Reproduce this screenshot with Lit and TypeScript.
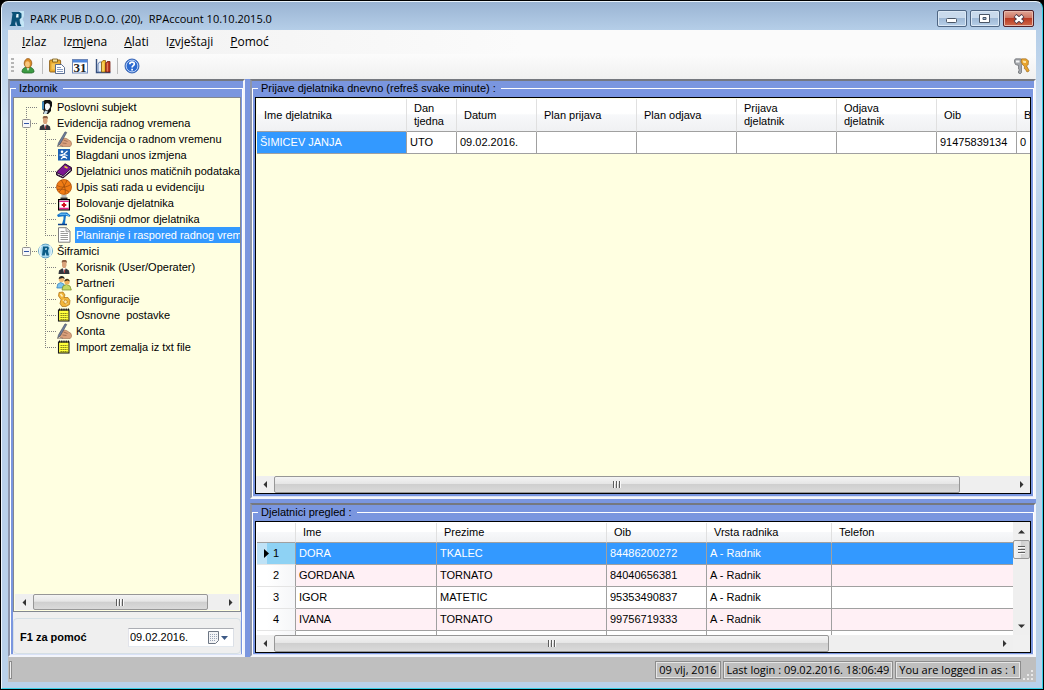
import { LitElement, html, svg, css, nothing, TemplateResult } from "lit";
import { customElement, property, state } from "lit/decorators.js";
import { classMap } from "lit/directives/class-map.js";

/* ---------- icons, all drawn in a 16 x 16 box ---------- */
const icons: Record<string, TemplateResult> = {
  logo: svg`<path d="M10 0h5v5l-1.500 3.500L15 11v5h-3z" fill="#c4e6f6"/><path d="M2.500 1h8l2 1.500v4L10.500 8.500l.5 4 1.500 2.500H8.500L7 10l-1 3 1 2H.500L2 13 3.500 3z" fill="#0b5177"/><path d="M7.500 3h2v3.500h-2.500z" fill="#e8f6fc"/>`,
  user: svg`<path d="M2 14c0-3 2-5 6-5s6 2 6 5l-2 1H4z" fill="#3d9b43" stroke="#226a2a" stroke-width=".8"/><path d="M6.500 9.500h3L8 13z" fill="#fff"/><ellipse cx="8" cy="5.300" rx="3.800" ry="4.700" fill="#d98a27" stroke="#8d4f10" stroke-width=".7"/><ellipse cx="7.500" cy="6.200" rx="2.300" ry="3" fill="#f8c67d"/>`,
  paste: svg`<rect x=".6" y="2" width="11" height="12" rx="1" fill="#e9a92c" stroke="#8a5a12" stroke-width=".9"/><path d="M3.500 1h5v3h-5z" fill="#f4e0a0" stroke="#77550f" stroke-width=".8"/><path d="M2.500 5.500h7v6h-7z" fill="#f6c75b"/><path d="M6.500 6.500h6l3 3v6h-9z" fill="#fff" stroke="#4a5f85" stroke-width=".9"/><path d="M8 9.500h4M8 11.500h6M8 13.500h6" stroke="#7990b8" stroke-width=".9"/>`,
  calendar: svg`<rect x=".5" y="1.500" width="15" height="13.500" fill="#fff" stroke="#6e87b8"/><path d="M1 2h14v2.500H1z" fill="#4f87dd"/><text x="8" y="14" text-anchor="middle" font-family="Liberation Serif, serif" font-weight="bold" font-size="13" fill="#222">31</text>`,
  chart: svg`<path d="M1.500 1v13.500H15.500" stroke="#36507e" fill="none" stroke-width="1.400"/><path d="M3 6l1.500-2 2 0v10H3z" fill="#e6eefa" stroke="#4a6aa3" stroke-width=".8"/><path d="M6.500 4l1.500-1.500h2.500V14h-4z" fill="#f1b92b" stroke="#8f6512" stroke-width=".8"/><path d="M10.800 5l1.500-1.500h2.700V14h-4.200z" fill="#bf3a25" stroke="#74190e" stroke-width=".8"/><path d="M12.300 5v8.500" stroke="#ee8a62"/><path d="M8 4.500v9" stroke="#fbe28c"/>`,
  help: svg`<circle cx="8" cy="8" r="7" fill="#2c6ad0" stroke="#1d4da3" stroke-width=".8"/><circle cx="8" cy="8" r="5.900" fill="none" stroke="#cfe0fb" stroke-width=".9"/><path d="M5.800 6.200C5.800 3.300 10.400 3.400 10.300 6c0 1.600-2.200 1.700-2.200 3.400M8.100 10.700v1.700" stroke="#fff" stroke-width="1.700" fill="none"/>`,
  keys: svg`<path d="M1.500 .8h5l2 1.700v3.500L7.500 7.500v7L6 16l-1.500-1v-2l1-1-1-1V7.500L1.500 6.500.5 4.500V2z" fill="#a2a6ab" stroke="#55585c" stroke-width=".6"/><path d="M2 2.500h3.500v2H2z" fill="#f4f5f6"/><path d="M7.500 .8h4.500l2.500 2-.3 4-1.700 1 2.700 4.700-1.200 1.500-1.500-.5-.8-2-1.400-.8.200-2L8.500 6.500 7 4z" fill="#e9a42c" stroke="#94611a" stroke-width=".6"/><path d="M8.500 2.500l3.500 .5v2H9.500z" fill="#fde3a1"/>`,
  head: svg`<path d="M5 3l3-2h5l2 2v4l-1 2v3l-3 3H6l1-3-2-2z" fill="#111"/><path d="M8 5.500l2-1.500 2.500 1 .7 3-1.200 2-1.500 1.500-1.700-.500L8 9z" fill="#f6f6f6"/><path d="M5 2.500h2v8H5z" fill="#3f86b8"/><path d="M8 11.500l3 1-1.500 2.500H6.500z" fill="#c6dbe6"/>`,
  person: svg`<path d="M2.500 15l.5-3.500 3-2h4l3 2 .5 3.500z" fill="#33363c"/><path d="M7 9h2.500l-1 5H8z" fill="#fff"/><path d="M8 10.500h.8v3.500H8z" fill="#b32020"/><path d="M6 2.500h4.500v4L9.500 9H7L6 7z" fill="#d9a37b"/><path d="M5.800 4V2l1-1h3l1 1v2l-1-1h-3z" fill="#8a5f43"/>`,
  hand: svg`<path d="M4 9.500L7.500 7l3 .500 4.500 3 .7 3-1.500 2H7l-3.500-1.500z" fill="#d9a07c" stroke="#9b6a4c" stroke-width=".6"/><path d="M7.500 9l4 1.500M6.500 12l4 .500" stroke="#8d5f45" stroke-width=".7"/><path d="M9 .8L10.800 1.500 4.500 12.500l-2.800 2.500.7-3z" fill="#6f7f9c" stroke="#333c4e" stroke-width=".5"/><path d="M1 15.300h6" stroke="#7b695c" stroke-width=".7"/>`,
  sport: svg`<rect x="2" y="2" width="12" height="11.500" fill="#1d62b5"/><circle cx="6" cy="4.800" r="1.300" fill="#fff"/><path d="M11.500 4L8 7l-3.500 1 3.500 1.500L5 12M8 9l3 2.500M8 7.500l3.500 1" stroke="#fff" stroke-width="1.200" fill="none"/>`,
  book: svg`<path d="M.6 9L9 .800l6.400 3.700V8l-8.400 7-6.400-3z" fill="#7a1690" stroke="#16021b" stroke-width=".9"/><path d="M1 9.800l6 2.900L15 5.500v2L7 14.300 1 11.500z" fill="#f4f0f5" stroke="#16021b" stroke-width=".8"/><path d="M8.500 3.500l3 1.500" stroke="#f2d43b" stroke-width="1.500"/>`,
  ball: svg`<circle cx="8" cy="8" r="7.500" fill="#f07c14" stroke="#b3540a" stroke-width=".8"/><path d="M1 6.500c5 2.500 9 2 14-1M5 1c3 4 5 9 4 14M1 10.500c5-1 9 0 12 2.500M11 1c-1 4-5 9-8 12" stroke="#8a420c" stroke-width=".6" fill="none"/>`,
  medic: svg`<path d="M5.500 0h5v2.500h-5z" fill="#bdbdbd"/><path d="M4.500 2.500h7v2h-7z" fill="#333"/><rect x="2.600" y="4.600" width="10.800" height="10.300" fill="#fff" stroke="#000" stroke-width="1.200"/><path d="M3.200 6.300h9.600M3.200 13.500h9.600" stroke="#e2248c" stroke-width="1.300"/><path d="M8 7.700v4.600M5.700 10h4.600" stroke="#d20f1c" stroke-width="2"/>`,
  palm: svg`<path d="M1 4l4-2.500h6l3.500 3-1 1.200-3.500-1L9.500 8 9 13H6L7.500 8 7.500 5.300 2 6z" fill="#1574c9"/><path d="M3.500 3.200h6l3.500 1.300" stroke="#7fd0ff" fill="none"/><path d="M2 13.500h9" stroke="#0c3f86" stroke-width="1.500"/>`,
  page: svg`<path d="M2.500.7h8l3.500 3.500v11h-11.500z" fill="#fff" stroke="#7e7e7e"/><path d="M10 .7v4h4" fill="#dcdcdc" stroke="#8b8b8b" stroke-width=".8"/><path d="M4.500 4.500h4M4.500 6.500h7.500M4.500 8.500h7.500M4.500 10.500h7.500M4.500 12.500h7.500" stroke="#8f8f8f" stroke-width=".9"/>`,
  globe: svg`<circle cx="8.500" cy="8" r="6.900" fill="#a9daf0" stroke="#5d9fc2"/><path d="M4.500 2.500C2 5 2 11 4.500 13.500M12.500 2.500c2.500 2.500 2.500 8.500 0 11" stroke="#e9f7fd" stroke-width="1.200" fill="none"/><path d="M6 3.500h5l1 1.500-1 3 1 4.500H9.500L8.500 9l-.8 3.500H5z" fill="#0b5c86"/><path d="M8.500 5h1.300L9.500 7H8.200z" fill="#d9f2fb"/>`,
  partners: svg`<path d="M.8 13l1-4 3-1.500 3 1.500 1 4z" fill="#7cc4ef" stroke="#2d79b5" stroke-width=".7"/><circle cx="5.500" cy="4.500" r="2.700" fill="#f2bd77"/><path d="M2.700 4c0-4 6-4 6 0l-2-1z" fill="#2b2a26"/><path d="M6 15l1-4 3.500-1.500L14 11l1.300 4z" fill="#c6d862" stroke="#73871f" stroke-width=".7"/><circle cx="11" cy="7" r="2.600" fill="#f0b35c"/><path d="M8.300 6.500c.3-4 5.500-3.500 5.400 0l-2-1z" fill="#4a3312"/>`,
  config: svg`<path d="M3 1.500l4-.5 2 3-1 2.500 4 0 2 3-.5 4L10 15.500H6L4 12.500l1-4L2.500 5z" fill="#f1b53a" stroke="#ae6f12" stroke-width=".7"/><path d="M4.500 3l2 2.500M7 9l4 4" stroke="#fff0bf" stroke-width="1.600"/><circle cx="9.500" cy="10.800" r="1.800" fill="#fbe9b4" stroke="#b77b16" stroke-width=".7"/>`,
  notes: svg`<rect x="2.500" y="3" width="10.500" height="11" fill="#ffff3c" stroke="#1a1a1a" stroke-width="1.100"/><path d="M3 2.500h10" stroke="#111" stroke-width="1.800" stroke-dasharray="1.200 1"/><path d="M4.500 6.500h7M4.500 8.500h7M4.500 10.500h7M4.500 12.500h7" stroke="#6c6914" stroke-width=".9" stroke-dasharray="1.400 .6"/>`,
};
const icon = (name: string) =>
  html`<svg class="icon" width="16" height="16" viewBox="0 0 16 16" aria-hidden="true">${icons[name]}</svg>`;

/* ---------- scroll bar ---------- */
@customElement("scroll-bar")
class ScrollBar extends LitElement {
  @property() orient: "h" | "v" = "h";
  @property({ type: Number }) size = 50;

  static styles = css`
    :host { display: block; background: #efefef; }
    .bar { display: flex; width: 100%; height: 100%; }
    .bar.v { flex-direction: column; }
    button { flex: none; width: 18px; height: 16px; padding: 0; border: 0; background: none; display: grid; place-items: center; }
    .v button { width: 17px; height: 18px; }
    .track { flex: 1; min-width: 0; min-height: 0; display: flex; }
    .v .track { flex-direction: column; }
    .thumb { box-sizing: border-box; border: 1px solid #979797; border-radius: 2px; display: grid; place-items: center;
      background: linear-gradient(#f4f4f4 0%, #e6e6e6 45%, #cfcfcf 50%, #dadada 100%); }
    .v .thumb { background: linear-gradient(90deg, #f4f4f4 0%, #e6e6e6 45%, #cfcfcf 50%, #dadada 100%); }
    .grip { width: 8px; height: 7px; background: repeating-linear-gradient(90deg, #5c5c5c 0 1px, #fafafa 1px 2px, transparent 2px 3px); }
    .v .grip { width: 7px; height: 8px; background: repeating-linear-gradient(#5c5c5c 0 1px, #fafafa 1px 2px, transparent 2px 3px); }
  `;

  private arrow(d: string, label: string) {
    return html`<button aria-label=${label}><svg width="7" height="7" viewBox="0 0 7 7"><path d=${d} fill="#333"/></svg></button>`;
  }

  render() {
    const v = this.orient === "v";
    const length = `${v ? "height" : "width"}:${this.size}%`;
    return html`<div class=${classMap({ bar: true, v })}>
      ${v ? this.arrow("M0 5.500L3.500 2 7 5.500z", "Gore") : this.arrow("M5 0L1.500 3.500 5 7z", "Lijevo")}
      <div class="track"><div class="thumb" style=${length}><span class="grip"></span></div></div>
      ${v ? this.arrow("M0 1.500L3.500 5 7 1.500z", "Dolje") : this.arrow("M2 0l3.500 3.500L2 7z", "Desno")}
    </div>`;
  }
}

/* ---------- navigation tree ---------- */
interface Node { text: string; icon: string; level: 0 | 1; parent?: boolean; first?: boolean; last?: boolean; under?: boolean; }

const nodes: Node[] = [
  { text: "Poslovni subjekt", icon: "head", level: 0, first: true },
  { text: "Evidencija radnog vremena", icon: "person", level: 0, parent: true },
  { text: "Evidencija o radnom vremenu", icon: "hand", level: 1, under: true },
  { text: "Blagdani unos izmjena", icon: "sport", level: 1, under: true },
  { text: "Djelatnici unos matičnih podataka", icon: "book", level: 1, under: true },
  { text: "Upis sati rada u evidenciju", icon: "ball", level: 1, under: true },
  { text: "Bolovanje djelatnika", icon: "medic", level: 1, under: true },
  { text: "Godišnji odmor djelatnika", icon: "palm", level: 1, under: true },
  { text: "Planiranje i raspored radnog vreme", icon: "page", level: 1, under: true, last: true },
  { text: "Šiframici", icon: "globe", level: 0, parent: true, last: true },
  { text: "Korisnik (User/Operater)", icon: "person", level: 1 },
  { text: "Partneri", icon: "partners", level: 1 },
  { text: "Konfiguracije", icon: "config", level: 1 },
  { text: "Osnovne  postavke", icon: "notes", level: 1 },
  { text: "Konta", icon: "hand", level: 1 },
  { text: "Import zemalja iz txt file", icon: "notes", level: 1, last: true },
];

@customElement("nav-tree")
class NavTree extends LitElement {
  @state() private selected = 8;

  static styles = css`
    :host { display: block; overflow: hidden; }
    ul { margin: 0; padding: 0; list-style: none; }
    li { display: flex; height: 16px; align-items: center; }
    svg { flex: none; display: block; }
    .guide { stroke: #808080; stroke-dasharray: 1 1; fill: none; }
    .label { flex: none; height: 16px; margin-left: 3px; padding: 0 1px; border: 0; background: none; color: #000; font: inherit; line-height: 16px; white-space: pre; }
    .label.on { background: #3399ff; color: #fff; }
  `;

  private rootGuide(n: Node) {
    const deep = n.level === 1;
    const y1 = n.first ? 8 : 0;
    const y2 = n.last && !deep ? 8 : 16;
    return svg`<svg width="23" height="16" viewBox="0 0 23 16" aria-hidden="true">
      ${!deep || n.under ? svg`<path class="guide" d=${`M12.500 ${y1}V${y2}`}/>` : nothing}
      ${!deep ? svg`<path class="guide" d="M12 8.500H23"/>` : nothing}
      ${n.parent ? svg`<rect x="8.500" y="4.500" width="8" height="8" rx="1" fill="#f7f7f7" stroke="#919191"/><path d="M10 8.500h5" stroke="#3355a5"/>` : nothing}
    </svg>`;
  }

  render() {
    return html`<ul role="tree" aria-label="Izbornik">${nodes.map((n, i) => html`
      <li role="treeitem" aria-level=${n.level + 1} aria-selected=${i === this.selected}>
        ${this.rootGuide(n)}
        ${n.level ? html`<svg width="19" height="16" viewBox="0 0 19 16" aria-hidden="true">
          <path class="guide" d=${`M8.500 0V${n.last ? 8 : 16}`}/><path class="guide" d="M8 8.500H19"/></svg>` : nothing}
        ${icon(n.icon)}
        <button class=${classMap({ label: true, on: i === this.selected })} @click=${() => (this.selected = i)}>${n.text}</button>
      </li>`)}</ul>`;
  }
}

/* ---------- application window ---------- */
const menu = [["", "I", "zlaz"], ["Iz", "m", "jena"], ["", "A", "lati"], ["I", "z", "vještaji"], ["", "P", "omoć"]];
const logColumns: [string, number][] = [["Ime djelatnika", 150], ["Dan\ntjedna", 50], ["Datum", 80], ["Plan prijava", 100],
  ["Plan odjava", 100], ["Prijava\ndjelatnik", 100], ["Odjava\ndjelatnik", 100], ["Oib", 80], ["B", 0]];
const logRow = ["ŠIMICEV JANJA", "UTO", "09.02.2016.", "", "", "", "", "91475839134", "0"];
const staffColumns: [string, number][] = [["", 39], ["Ime", 141], ["Prezime", 170], ["Oib", 100], ["Vrsta radnika", 125], ["Telefon", 0]];
const staff = [
  ["DORA", "TKALEC", "84486200272"],
  ["GORDANA", "TORNATO", "84040656381"],
  ["IGOR", "MATETIC", "95353490837"],
  ["IVANA", "TORNATO", "99756719333"],
];

@customElement("app-root")
class AppRoot extends LitElement {
  static styles = css`
    :host { display: block; height: 100vh; background: #000; color: #000; font: 11px/13px "Liberation Sans", Arial, sans-serif; }
    * { box-sizing: border-box; }
    button { font: inherit; color: inherit; }
    .ui { font: 12px/16px "Open Sans", "Noto Sans", sans-serif; }
    .ui.small { font-size: 11px; }

    .window { height: 100%; padding: 0 6px 6px; display: flex; flex-direction: column; border: 1px solid; border-color: #e9f3fb #35cfe6 #35cfe6 #eef6fc; border-radius: 7px 7px 0 0;
      background: linear-gradient(#9ab4d3 0, #b5cee8 28px, #cfe1f3 120px, #b9d1ea 220px, #b9d1ea 100%); }
    .shell { height: 100%; padding: 1px; }
    .title { display: flex; align-items: center; height: 28px; padding: 5px 2px 0 1px; flex: none; gap: 5px; }
    .title h1 { flex: 1; margin: 0; font: inherit; white-space: pre; }
    .controls { display: flex; gap: 3px; align-self: flex-start; padding-top: 3px; }
    .control { width: 30px; height: 17px; padding: 0; border: 1px solid #4f6683; border-radius: 2px; display: grid; place-items: center;
      background: linear-gradient(#c9daec 0 45%, #9fb9d6 50%, #b7cfe8); box-shadow: inset 0 0 0 1px #dbe8f5; }
    .control.close { width: 31px; border-color: #51202a; background: linear-gradient(#e0a595 0, #cf7764 45%, #b93a23 50%, #cf6a4c); box-shadow: inset 0 0 0 1px #e8b9ac; }
    .icon { display: block; flex: none; }

    .client { flex: 1; min-height: 0; display: flex; flex-direction: column; background: #f0f0f0; }
    .menu { display: flex; flex: none; height: 24px; padding-left: 5px; align-items: center; background: linear-gradient(90deg, #f0f0f0, #fbfbfb 50%); }
    .menu button { padding: 0 8px 0 9px; height: 20px; border: 0; background: none; white-space: nowrap; }
    .tools { display: flex; flex: none; height: 25px; padding: 0 3px 1px; align-items: center; background: linear-gradient(#fcfcfc, #f0f0f0); }
    .tools button { width: 23px; height: 22px; padding: 0; border: 0; background: none; display: grid; place-items: center; }
    .grip { width: 3px; height: 16px; margin-right: 2px; background: repeating-linear-gradient(#b5b5b5 0 2px, transparent 2px 4px); }
    .rule { width: 1px; height: 16px; margin: 0 2px 0 3px; background: #bdbdbd; }
    .push { margin-left: auto; }

    .main { flex: 1; min-height: 0; display: grid; grid-template-columns: 237px minmax(0, 1fr); column-gap: 5px; background: #7a96df; }
    .column { display: grid; grid-template-rows: minmax(0, 1fr) auto; row-gap: 4px; min-height: 0; }
    .panel { min-width: 0; min-height: 0; display: flex; background: #7a96df; border: 2px solid; border-color: #75787f #f3f5fb #f3f5fb #8d95aa; }
    fieldset { flex: 1; min-width: 0; min-height: 0; margin: 0; padding: 2px 2px 1px; display: flex; flex-direction: column; border: 1px solid; border-color: #fff #fff #d9e1f6; }
    .nav fieldset { padding: 2px 1px 0 2px; }
    .log fieldset { padding-bottom: 2px; }
    .panel legend { margin-left: 3px; padding: 0 5px 0 3px; height: 14px; line-height: 14px; white-space: pre; }

    .treebox { flex: 1; min-height: 0; display: flex; flex-direction: column; padding-top: 1px; background: #ffffe1; border: 1px solid #828790; }
    .treebox nav-tree { flex: 1; min-height: 0; }
    .hbar { flex: none; height: 16px; }
    .treebox .hbar { margin: 0 1px 1px; }
    .date { flex: none; padding-top: 6px; background: #efefef; }
    .daterow { display: flex; align-items: center; height: 36px; padding: 2px 6px 0; border: 1px solid #d5dfe5; border-radius: 4px; }
    .daterow label { flex: 1; font-weight: bold; }
    .picker { display: flex; width: 106px; height: 19px; background: #fff; border: 1px solid; border-color: #abadb3 #dbdfe6 #e3e9ef #e2e3ea; }
    .picker input { flex: 1; min-width: 0; padding: 0 0 0 1px; border: 0; background: none; font: inherit; outline: none; }
    .picker button { width: 28px; padding: 0; border: 0; background: none; display: grid; place-items: center; }

    .grid { flex: 1; min-height: 0; display: grid; grid-template-rows: minmax(0, 1fr) 17px; border: 1px solid #000; background: #ffffe1; overflow: hidden; }
    .grid .hbar { height: 17px; }
    .staff { grid-template-columns: minmax(0, 1fr) 17px; background: #fff; }
    .view { min-width: 0; min-height: 0; overflow: hidden; padding: 1px 0 0 1px; }
    .staff .view { height: 113px; }
    .corner { background: #f0f0f0; }
    table { width: 100%; table-layout: fixed; border-collapse: separate; border-spacing: 0; }
    th { height: 33px; padding: 0 0 0 7px; overflow: hidden; text-align: left; font-weight: normal; white-space: pre-line; border-right: 1px solid #e0e0e0; border-bottom: 1px solid #a0a0a0;
      background: linear-gradient(#fff 0 45%, #f7f8fa 50%, #f0f1f3); }
    td { height: 22px; padding: 0 3px; overflow: hidden; white-space: nowrap; background: #fff; border-right: 1px solid #a0a0a0; border-bottom: 1px solid #a0a0a0; }
    td.sel, tr.sel td { background: #3399ff; color: #fff; }
    .staff thead th { height: 20px; }
    .staff tr > :last-child, .log tr > :last-child { border-right: 0; }
    .staff tbody tr:nth-child(even) td { background: #fff0f5; }
    .staff tbody th { height: 22px; border-right-color: #a0a0a0; border-bottom-color: #e4e4e4; background: linear-gradient(90deg, #fff 25%, #f5f6f8); }
    .staff tbody tr.sel th { background: linear-gradient(90deg, #bfe2f6 25%, #8ed2f4 26%); }
    .rowhead { display: flex; align-items: center; gap: 1px; }
    .mark { width: 8px; }
    .staff tbody tr:last-child > * { border-bottom: 0; }

    .status { flex: none; height: 25px; display: flex; align-items: center; gap: 2px; background: #bfbfbf; }
    .status .cell { height: 18px; padding: 0 3px; border: 1px solid #8c8c8c; box-shadow: inset 0 0 0 1px #e6e6e6; white-space: nowrap; }
    .status .handle { width: 3px; height: 18px; margin: 0 auto 0 1px; border: 1px solid #8c8c8c; background: #f0f0f0; }
    .sizer { align-self: flex-end; display: block; }
  `;

  private cols(list: [string, number][]) {
    return html`<colgroup>${list.map(([, w]) => (w ? html`<col style=${`width:${w}px`}>` : html`<col>`))}</colgroup>`;
  }

  private tool(name: string, label: string) {
    return html`<button aria-label=${label} title=${label}>${icon(name)}</button>`;
  }

  render() {
    return html`<div class="shell"><div class="window">
      <header class="title ui small">
        ${icon("logo")}
        <h1>PARK PUB D.O.O. (20),  RPAccount 10.10.2015.0</h1>
        <div class="controls">
          <button class="control" aria-label="Minimiziraj"><svg width="12" height="9"><rect x=".5" y="4.500" width="10" height="4" rx="1" fill="#fff" stroke="#4a5666"/></svg></button>
          <button class="control" aria-label="Maksimiziraj"><svg width="12" height="9"><path d="M.5.500h10v8H.500zM4 3.500v2h3v-2z" fill="#fff" fill-rule="evenodd" stroke="#4a5666"/></svg></button>
          <button class="control close" aria-label="Zatvori"><svg width="12" height="10"><path d="M2 1.500L10 8.500M10 1.500L2 8.500" stroke="#4e3a48" stroke-width="4.400"/><path d="M2.500 2L9.500 8M9.500 2L2.500 8" stroke="#fff" stroke-width="2.600"/></svg></button>
        </div>
      </header>
      <div class="client">
        <nav class="menu ui">${menu.map(([a, k, b]) => html`<button>${a}<u>${k}</u>${b}</button>`)}</nav>
        <div class="tools" role="toolbar">
          <span class="grip"></span>
          ${this.tool("user", "Korisnik")}
          <span class="rule"></span>
          ${this.tool("paste", "Zalijepi")}${this.tool("calendar", "Kalendar")}${this.tool("chart", "Grafikon")}
          <span class="rule"></span>
          ${this.tool("help", "Pomoć")}
          <span class="push">${this.tool("keys", "Lozinke")}</span>
        </div>
        <main class="main">
          <section class="panel nav">
            <fieldset>
              <legend>Izbornik</legend>
              <div class="treebox">
                <nav-tree></nav-tree>
                <scroll-bar class="hbar" size="93"></scroll-bar>
              </div>
              <div class="date"><div class="daterow">
                <label for="day">F1 za pomoć</label>
                <div class="picker">
                  <input id="day" type="text" value="09.02.2016.">
                  <button aria-label="Otvori kalendar"><svg width="22" height="13" viewBox="0 0 22 13"><path d="M.5.500h10v9l-3 3h-7z" fill="#f3f4f6" stroke="#6d7684"/><path d="M2 3.500h7M2 5.500h7M2 7.500h7M2 9.500h5" stroke="#9aa5b8" stroke-dasharray="1 1"/><path d="M13 5h7l-3.500 4z" fill="#3d5a86"/></svg></button>
                </div>
              </div></div>
            </fieldset>
          </section>
          <div class="column">
            <section class="panel log">
              <fieldset>
                <legend>Prijave djelatnika dnevno (refreš svake minute) :</legend>
                <div class="grid">
                  <div class="view"><table>
                    ${this.cols(logColumns)}
                    <thead><tr>${logColumns.map(([t]) => html`<th>${t}</th>`)}</tr></thead>
                    <tbody><tr>${logRow.map((t, i) => html`<td class=${i ? "" : "sel"}>${t}</td>`)}</tr></tbody>
                  </table></div>
                  <scroll-bar class="hbar" size="93"></scroll-bar>
                </div>
              </fieldset>
            </section>
            <section class="panel">
              <fieldset>
                <legend>Djelatnici pregled :</legend>
                <div class="grid staff">
                  <div class="view"><table>
                    ${this.cols(staffColumns)}
                    <thead><tr>${staffColumns.map(([t]) => html`<th>${t}</th>`)}</tr></thead>
                    <tbody>
                      ${staff.map((r, i) => html`<tr class=${i ? "" : "sel"}>
                        <th scope="row"><span class="rowhead"><svg class="mark" width="8" height="9" viewBox="0 0 8 9">${i ? nothing : svg`<path d="M0 0l5 4.500L0 9z"/>`}</svg>${i + 1}</span></th>
                        ${r.map((t) => html`<td>${t}</td>`)}<td>A - Radnik</td><td></td></tr>`)}
                      <tr><th></th><td></td><td></td><td></td><td></td><td></td></tr>
                    </tbody>
                  </table></div>
                  <scroll-bar orient="v" size="25"></scroll-bar>
                  <scroll-bar class="hbar" size="77"></scroll-bar>
                  <div class="corner"></div>
                </div>
              </fieldset>
            </section>
          </div>
        </main>
        <footer class="status ui small">
          <span class="handle"></span>
          <span class="cell">09 vlj, 2016</span>
          <span class="cell">Last login : 09.02.2016. 18:06:49</span>
          <span class="cell">You are logged in as : 1</span>
          <svg class="sizer" width="13" height="13" viewBox="0 0 13 13"><path d="M8 1h2v2H8zM4 5h2v2H4zM8 5h2v2H8zM0 9h2v2H0zM4 9h2v2H4zM8 9h2v2H8z" fill="#e9e9e9"/></svg>
        </footer>
      </div>
    </div></div>`;
  }
}
